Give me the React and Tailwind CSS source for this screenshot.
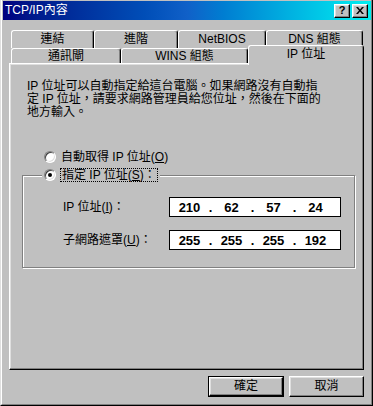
import React from "react";

const bevel =
  "border border-t-white border-l-white border-r-black border-b-black shadow-[inset_-1px_-1px_0_#808080,inset_1px_1px_0_#dfdfdf]";

const Tab = ({ w, children, selected }) => (
  <div
    className={`flex items-center justify-center bg-[#c0c0c0] border-t border-l border-r border-t-white border-l-white border-r-black rounded-t-[3px] shadow-[inset_-1px_0_0_#808080] ${w} ${
      selected ? "h-[20px] pb-[2px]" : ""
    }`}
  >
    {children}
  </div>
);

const Radio = ({ checked }) => (
  <span className="flex items-center justify-center w-[12px] h-[12px] rounded-full bg-white border border-t-[#808080] border-l-[#808080] border-r-white border-b-white shadow-[inset_1px_1px_0_#404040,inset_-1px_-1px_0_#dfdfdf]">
    {checked && <span className="w-[4px] h-[4px] rounded-full bg-black" />}
  </span>
);

const IpField = ({ parts }) => (
  <div className="flex items-center w-[172px] h-[20px] bg-white border border-black pl-[5px] font-['Liberation_Sans',sans-serif] font-bold text-[13px]">
    {parts.map((p, i) => (
      <React.Fragment key={i}>
        {i > 0 && <span className="w-[13px] text-center">.</span>}
        <span className="w-[29px] text-center">{p}</span>
      </React.Fragment>
    ))}
  </div>
);

const App = () => {
  return (
    <div className="w-[373px] h-[406px] bg-[#c0c0c0] border-l border-r border-b border-l-[#dfdfdf] border-r-black border-b-black text-[12px] leading-[13px] text-black font-['Liberation_Sans','Noto_Sans_CJK_TC',sans-serif]">
      <div className="h-full border-l border-r border-b border-l-white border-r-[#808080] border-b-[#808080] pt-[1px]">
        {/* title bar */}
        <div className="ml-[1px] h-[19px] flex items-center bg-linear-to-r from-[#000080] via-[#1060c8] to-[#00f0f0] pl-[2px] pr-[3px]">
          <span className="text-white">TCP/IP內容</span>
          <div className="ml-auto flex gap-[2px]">
            <div className={`w-[16px] h-[14px] bg-[#c0c0c0] flex items-center justify-center ${bevel}`}>
              <span className="font-bold text-[11px] leading-none">?</span>
            </div>
            <div className={`w-[16px] h-[14px] bg-[#c0c0c0] flex items-center justify-center ${bevel}`}>
              <svg width="8" height="7" viewBox="0 0 8 7">
                <path d="M0 0h2l2 2.5L6 0h2L5 3.5 8 7H6L4 4.5 2 7H0l3-3.5z" fill="black" />
              </svg>
            </div>
          </div>
        </div>

        {/* tabs */}
        <div className="ml-[9px] mt-[10px] flex h-[18px]">
          <Tab w="w-[83px]">連結</Tab>
          <Tab w="w-[84px]">進階</Tab>
          <Tab w="w-[88px]">NetBIOS</Tab>
          <Tab w="w-[97px]">DNS 組態</Tab>
        </div>
        <div className="relative z-10 ml-[9px] -mt-[3px] flex items-start h-[18px]">
          <div className="mt-[3px] h-[15px] flex">
            <Tab w="w-[110px]">通訊閘</Tab>
            <Tab w="w-[127px]">WINS 組態</Tab>
          </div>
          <Tab w="w-[116px]" selected>
            IP 位址
          </Tab>
        </div>

        {/* panel */}
        <div className="ml-[7px] w-[355px] h-[307px] border border-t-white border-l-white border-r-black border-b-black shadow-[inset_-1px_-1px_0_#808080,inset_1px_1px_0_#dfdfdf] pl-[17px] pt-[16px]">
          <p>
            IP 位址可以自動指定給這台電腦。如果網路沒有自動指
            <br />
            定 IP 位址，請要求網路管理員給您位址，然後在下面的
            <br />
            地方輸入。
          </p>

          <div className="mt-[31px] ml-[17px] flex items-center gap-[5px] h-[14px]">
            <Radio />
            <span>
              自動取得 IP 位址(<span className="underline">O</span>)
            </span>
          </div>

          <div className="relative mt-[11px] -ml-[5px] w-[333px] border border-[#808080] shadow-[1px_1px_0_white,inset_1px_1px_0_white] pt-[21px] pb-[17px] pl-[40px]">
            <div className="absolute left-[19px] -top-[8px] h-[14px] flex items-center gap-[4px] bg-[#c0c0c0] px-[2px]">
              <Radio checked />
              <span className="h-[14px] flex items-center border border-dotted border-black px-[1px]">
                指定 IP 位址(<span className="underline">S</span>)：
              </span>
            </div>

            <div className="flex items-center">
              <span className="w-[106px]">
                IP 位址(<span className="underline">I</span>)：
              </span>
              <IpField parts={["210", "62", "57", "24"]} />
            </div>
            <div className="mt-[13px] flex items-center">
              <span className="w-[106px]">
                子網路遮罩(<span className="underline">U</span>)：
              </span>
              <IpField parts={["255", "255", "255", "192"]} />
            </div>
          </div>
        </div>

        {/* buttons */}
        <div className="mt-[6px] pr-[7px] flex justify-end gap-[5px]">
          <div className="w-[76px] h-[21px] border border-black">
            <div className={`h-full flex items-center justify-center ${bevel}`}>確定</div>
          </div>
          <div className={`w-[75px] h-[21px] flex items-center justify-center ${bevel}`}>取消</div>
        </div>
      </div>
    </div>
  );
};

export default App;
